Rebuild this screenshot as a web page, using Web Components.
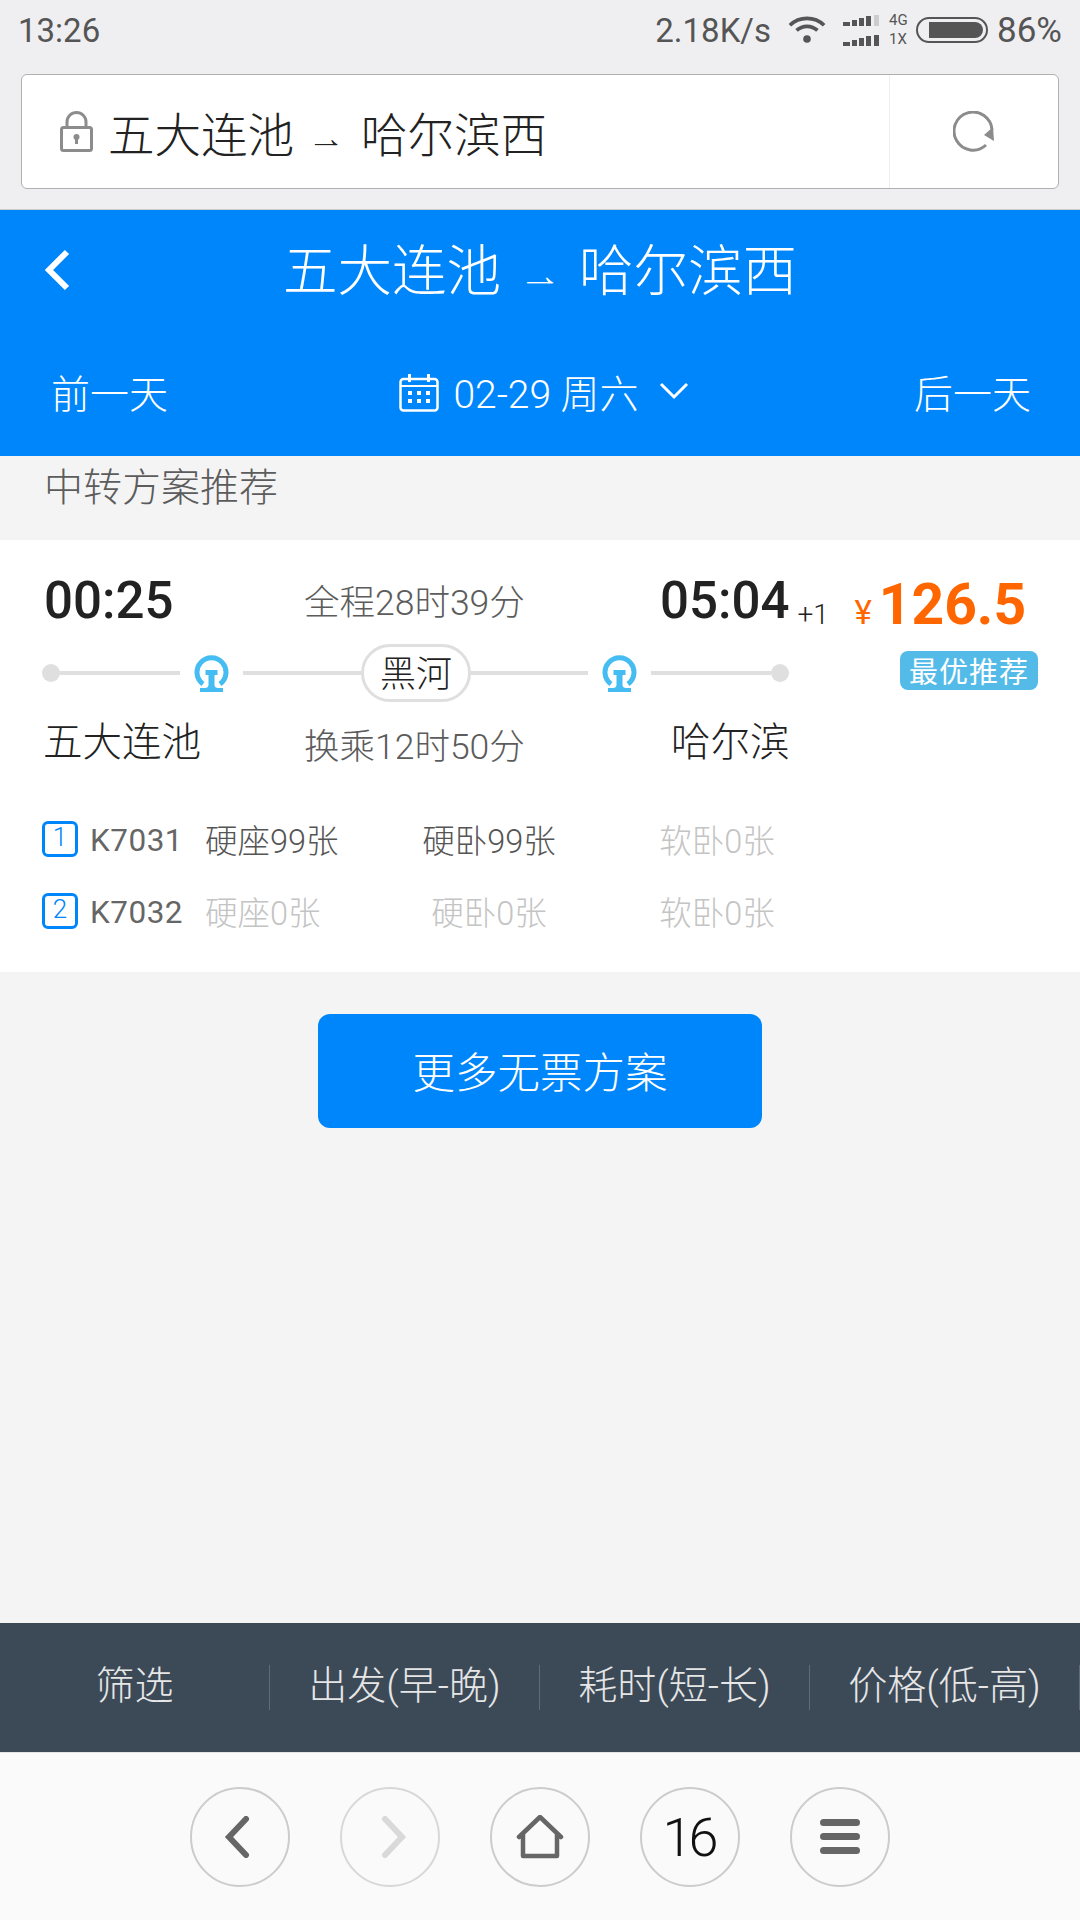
<!DOCTYPE html>
<html lang="zh">
<head>
<meta charset="utf-8">
<title>五大连池 → 哈尔滨西</title>
<style>
    html, body { margin: 0; padding: 0; }
    body {
        width: 1080px;
        height: 1920px;
        display: flex;
        flex-direction: column;
        overflow: hidden;
        background: #f4f4f4;
        font-family: Roboto, "Noto Sans CJK SC", sans-serif;
    }
</style>
</head>
<body>
<status-bar></status-bar>
<address-bar>五大连池</address-bar>
<route-header from="五大连池" to="哈尔滨西"></route-header>
<transfer-list>
    <transfer-card></transfer-card>
    <more-button>更多无票方案</more-button>
</transfer-list>
<filter-bar></filter-bar>
<browser-nav></browser-nav>

<script>
const font = `Roboto, "Noto Sans CJK SC", sans-serif`;

class statusBar extends HTMLElement {
    constructor() {
        super();
        const shadow = this.attachShadow({ mode: "open" });
        shadow.innerHTML = /* html */ `
        <style>
            :host {
                display: flex;
                align-items: center;
                height: 60px;
                padding: 0 18px;
                background: #efeff2;
                color: #555;
                font: 33px ${font};
            }
            .time { flex-grow: 1; }
            .speed { margin-right: 17px; }
            .wifi { margin-right: 17px; }
            .signal { display: flex; flex-direction: column; gap: 9px; margin-right: 9px; }
            .net { display: flex; flex-direction: column; gap: 6px; font-size: 15px; line-height: 13px; width: 27px; }
            .battery { margin-right: 9px; }
            .pct { font-size: 35px; }
            svg { display: block; }
        </style>
        <div class="time">13:26</div>
        <div class="speed">2.18K/s</div>
        <svg class="wifi" width="38" height="28" viewBox="0 0 40 28">
            <path d="M2 9 A26 26 0 0 1 38 9" fill="none" stroke="#555" stroke-width="4"/>
            <path d="M9 14.500 A16 16 0 0 1 31 14.500" fill="none" stroke="#555" stroke-width="4"/>
            <circle cx="20" cy="23.500" r="4" fill="#555"/>
        </svg>
        <div class="signal">
            <svg width="37" height="11" viewBox="0 0 37 11" fill="#555">
                <rect x="0" y="7" width="7" height="4"/><rect x="9" y="5" width="5" height="6"/><rect x="16" y="3" width="5" height="8"/><rect x="23" y="1" width="5" height="10"/><rect x="31" y="0" width="5" height="11" fill="#ccc"/>
            </svg>
            <svg width="37" height="11" viewBox="0 0 37 11" fill="#555">
                <rect x="0" y="7" width="7" height="4"/><rect x="9" y="5" width="5" height="6"/><rect x="16" y="3" width="5" height="8"/><rect x="23" y="1" width="5" height="10"/><rect x="31" y="0" width="5" height="11"/>
            </svg>
        </div>
        <div class="net"><span>4G</span><span>1X</span></div>
        <svg class="battery" width="72" height="26" viewBox="0 0 72 26">
            <rect x="1" y="1" width="70" height="24" rx="12" fill="none" stroke="#555" stroke-width="2"/>
            <path d="M13 5 H59 A8 8 0 0 1 67 13 A8 8 0 0 1 59 21 H13 Z" fill="#555"/>
        </svg>
        <div class="pct">86%</div>
        `;
    }
}

class addressBar extends HTMLElement {
    constructor() {
        super();
        const shadow = this.attachShadow({ mode: "open" });
        shadow.innerHTML = /* html */ `
        <style>
            :host {
                display: block;
                padding: 14px 21px 20px 21px;
                background: #efeff2;
                border-bottom: 1px solid #ccc;
            }
            .box {
                display: flex;
                height: 113px;
                background: #fff;
                border: 1px solid #b0b0b0;
                border-radius: 6px;
            }
            .url {
                flex-grow: 1;
                display: flex;
                align-items: center;
                padding-left: 38px;
                color: #222;
                font: 300 46.500px ${font};
            }
            .lock { margin-right: 15px; }
            .arrow {
                font: 38px "Liberation Sans", sans-serif;
                margin: 13px 16px 0 13px;
                clip-path: inset(0 0 33% 0);
            }
            .reload {
                width: 168px;
                display: flex;
                align-items: center;
                justify-content: center;
                border-left: 1px solid #eee;
            }
        </style>
        <div class="box">
            <div class="url">
                <svg class="lock" width="33" height="41" viewBox="0 0 33 41">
                    <path d="M7 17 V11 A9.500 9.500 0 0 1 26 11 V17" fill="none" stroke="#8c8c8c" stroke-width="3"/>
                    <rect x="1.500" y="16.500" width="30" height="23" rx="2" fill="none" stroke="#8c8c8c" stroke-width="3"/>
                    <circle cx="16.500" cy="26" r="3" fill="#8c8c8c"/><rect x="15" y="26" width="3" height="7" fill="#8c8c8c"/>
                </svg>
                <span><slot></slot></span><span class="arrow">→</span><span>哈尔滨西</span>
            </div>
            <div class="reload">
                <svg width="42" height="42" viewBox="0 0 42 42">
                    <path d="M33 34 A19 19 0 1 1 39 19" fill="none" stroke="#8c8c8c" stroke-width="3"/>
                    <path d="M40 16 L41 30 L31 24 Z" fill="#8c8c8c"/>
                </svg>
            </div>
        </div>
        `;
    }
}

class routeHeader extends HTMLElement {
    constructor() {
        super();
        const shadow = this.attachShadow({ mode: "open" });
        shadow.innerHTML = /* html */ `
        <style>
            :host {
                display: block;
                height: 246px;
                background: #0086fb;
                color: #fff;
                font-family: ${font};
                font-weight: 300;
            }
            .top {
                display: grid;
                grid-template-columns: 1fr auto 1fr;
                align-items: center;
                height: 112px;
                font-size: 54.500px;
            }
            .back { margin: 7px 0 0 43px; display: block; }
            .route { display: flex; align-items: center; }
            .arrow {
                font: 44px "Liberation Sans", sans-serif;
                margin: 18px 17px 0 17px;
                clip-path: inset(0 0 33% 0);
            }
            .dates {
                display: flex;
                justify-content: space-between;
                align-items: center;
                height: 134px;
                padding: 4px 49px 0 51px;
                box-sizing: border-box;
                font-size: 39px;
            }
            .pick { display: flex; align-items: center; margin-left: 6px; }
            .cal { margin: 4px 14px 0 0; }
            .chev { margin-left: 20px; }
        </style>
        <div class="top">
            <svg class="back" width="28" height="42" viewBox="0 0 28 42">
                <path d="M24 3 L6 21 L24 39" fill="none" stroke="#fff" stroke-width="6"/>
            </svg>
            <div class="route">
                <span>${this.getAttribute("from")}</span><span class="arrow">→</span><span>${this.getAttribute("to")}</span>
            </div>
        </div>
        <div class="dates">
            <div>前一天</div>
            <div class="pick">
                <svg class="cal" width="40" height="38" viewBox="0 0 40 38" fill="#fff">
                    <rect x="1.500" y="5" width="37" height="31.500" rx="3" fill="none" stroke="#fff" stroke-width="2.500"/>
                    <rect x="9" y="0" width="3" height="8"/><rect x="28" y="0" width="3" height="8"/>
                    <rect x="2" y="11" width="36" height="2"/>
                    <rect x="9" y="17" width="4" height="4"/><rect x="18" y="17" width="4" height="4"/><rect x="27" y="17" width="4" height="4"/>
                    <rect x="9" y="25" width="4" height="4"/><rect x="18" y="25" width="4" height="4"/><rect x="27" y="25" width="4" height="4"/>
                </svg>
                <span>02-29 周六</span>
                <svg class="chev" width="30" height="18" viewBox="0 0 30 18">
                    <path d="M2 2 L15 15 L28 2" fill="none" stroke="#fff" stroke-width="3"/>
                </svg>
            </div>
            <div>后一天</div>
        </div>
        `;
    }
}

class transferList extends HTMLElement {
    constructor() {
        super();
        const shadow = this.attachShadow({ mode: "open" });
        shadow.innerHTML = /* html */ `
        <style>
            :host {
                display: block;
                flex-grow: 1;
                background: #f4f4f4;
            }
            .title {
                height: 84px;
                padding: 8px 0 0 44px;
                box-sizing: border-box;
                color: #5c5c5c;
                font: 300 39px/48px ${font};
            }
        </style>
        <div class="title">中转方案推荐</div>
        <slot></slot>
        `;
    }
}

class railIcon extends HTMLElement {
    constructor() {
        super();
        const shadow = this.attachShadow({ mode: "open" });
        shadow.innerHTML = /* html */ `
        <style>
            :host { display: block; width: 35px; height: 38px; }
            svg { display: block; }
        </style>
        <svg width="35" height="38" viewBox="0 0 35 38" fill="#45bcf2">
            <path d="M9 30 A14.500 14.500 0 1 1 26 30" fill="none" stroke="#45bcf2" stroke-width="5"/>
            <path d="M11.500 16 H23.500 V21 H20.500 V31 C20.500 33 22 34 24 34 H29 V38 H6 V34 H11 C13 34 14.500 33 14.500 31 V21 H11.500 Z"/>
        </svg>
        `;
    }
}

class trainRow extends HTMLElement {
    constructor() {
        super();
        const shadow = this.attachShadow({ mode: "open" });
        const seats = this.getAttribute("seats").split(",");
        const cell = (text) => {
            const none = /[^9]0张/.test(text);
            return `<div class="seat ${none ? "none" : ""}">${text}</div>`;
        };
        shadow.innerHTML = /* html */ `
        <style>
            :host {
                display: flex;
                align-items: center;
                height: 72px;
                padding-left: 42px;
                color: #555;
                font: 300 31.500px ${font};
            }
            .num {
                width: 36px;
                height: 36px;
                box-sizing: border-box;
                display: flex;
                align-items: center;
                justify-content: center;
                margin-right: 12px;
                padding-bottom: 4px;
                border: 3px solid #0086fb;
                border-radius: 6px;
                color: #0086fb;
                font-size: 26px;
                line-height: 26px;
            }
            .code { width: 115px; padding-top: 2px; color: #666; font-weight: 400; letter-spacing: 0.5px; }
            .seat { font-size: 32.500px; padding-bottom: 2px; }
            .none { color: #c4c4c4; }
            .seat:nth-of-type(3) { width: 170px; }
            .seat:nth-of-type(4) { width: 228px; text-align: center; }
            .seat:nth-of-type(5) { width: 228px; text-align: center; }
        </style>
        <div class="num">${this.getAttribute("num")}</div>
        <div class="code">${this.getAttribute("code")}</div>
        ${cell(seats[0])}${cell(seats[1])}${cell(seats[2])}
        `;
    }
}

class transferCard extends HTMLElement {
    constructor() {
        super();
        const shadow = this.attachShadow({ mode: "open" });
        shadow.innerHTML = /* html */ `
        <style>
            :host {
                display: block;
                height: 432px;
                background: #fff;
                color: #222;
                font-family: ${font};
            }
            .times {
                display: flex;
                align-items: baseline;
                height: 103px;
                padding: 25px 0 0 44px;
                box-sizing: border-box;
            }
            .time { font-size: 51px; font-weight: 500; line-height: 58px; }
            .from { width: 260px; }
            .total { width: 356px; color: #5c5c5c; font-size: 35.500px; font-weight: 300; position: relative; top: -3px; }
            .plus { width: 57px; margin-left: 8px; font-size: 28px; font-weight: 300; position: relative; top: 6px; }
            .yen { color: #ff6600; font-size: 33px; position: relative; top: 6px; margin-right: 7px; }
            .price { color: #ff6600; font-size: 57px; font-weight: 700; position: relative; top: 6px; }
            .track {
                display: flex;
                align-items: center;
                height: 60px;
                padding-left: 42px;
            }
            .dot { width: 18px; height: 18px; border-radius: 50%; background: #dfdfdf; flex: none; }
            .line { height: 4px; background: #dfdfdf; flex: none; }
            .stop {
                flex: none;
                box-sizing: border-box;
                width: 110px;
                height: 58px;
                padding-bottom: 4px;
                display: flex;
                align-items: center;
                justify-content: center;
                border: 3px solid #dfdfdf;
                border-radius: 29px;
                font-size: 36px;
                font-weight: 300;
            }
            rail-icon { margin: 0 14px; flex: none; }
            .tag {
                flex: none;
                margin: -6px 0 0 111px;
                width: 138px;
                height: 39px;
                display: flex;
                align-items: center;
                justify-content: center;
                background: #54bbe9;
                border-radius: 8px;
                color: #fff;
                font-size: 29px;
                font-weight: 400;
                letter-spacing: 1px;
            }
            .names {
                display: flex;
                align-items: center;
                height: 70px;
                padding-left: 43px;
                font-size: 39.500px;
                font-weight: 300;
            }
            .names .a { width: 261px; }
            .names .mid { width: 367px; padding-top: 10px; color: #5c5c5c; font-size: 35.500px; }
            .trains { padding-top: 30px; }
        </style>
        <div class="times">
            <div class="time from">00:25</div>
            <div class="total">全程28时39分</div>
            <div class="time">05:04</div>
            <div class="plus">+1</div>
            <div class="yen">¥</div>
            <div class="price">126.5</div>
        </div>
        <div class="track">
            <div class="dot"></div>
            <div class="line" style="width: 120px"></div>
            <rail-icon></rail-icon>
            <div class="line" style="width: 118px"></div>
            <div class="stop">黑河</div>
            <div class="line" style="width: 117px"></div>
            <rail-icon></rail-icon>
            <div class="line" style="width: 120px"></div>
            <div class="dot"></div>
            <div class="tag">最优推荐</div>
        </div>
        <div class="names">
            <div class="a">五大连池</div>
            <div class="mid">换乘12时50分</div>
            <div>哈尔滨</div>
        </div>
        <div class="trains">
            <train-row num="1" code="K7031" seats="硬座99张,硬卧99张,软卧0张"></train-row>
            <train-row num="2" code="K7032" seats="硬座0张,硬卧0张,软卧0张"></train-row>
        </div>
        `;
    }
}

class moreButton extends HTMLElement {
    constructor() {
        super();
        const shadow = this.attachShadow({ mode: "open" });
        shadow.innerHTML = /* html */ `
        <style>
            :host {
                display: flex;
                justify-content: center;
                padding-top: 42px;
            }
            .btn {
                width: 444px;
                height: 114px;
                padding-bottom: 4px;
                box-sizing: border-box;
                display: flex;
                align-items: center;
                justify-content: center;
                background: #0086fb;
                border-radius: 12px;
                color: #fff;
                font: 300 42.500px ${font};
            }
        </style>
        <div class="btn"><slot></slot></div>
        `;
    }
}

class filterBar extends HTMLElement {
    constructor() {
        super();
        const shadow = this.attachShadow({ mode: "open" });
        const tabs = ["筛选", "出发(早-晚)", "耗时(短-长)", "价格(低-高)"];
        shadow.innerHTML = /* html */ `
        <style>
            :host {
                display: flex;
                height: 129px;
                padding-top: 42px;
                box-sizing: border-box;
                background: #3c4a58;
                color: #e6e6e6;
                font: 300 39px ${font};
            }
            .tab {
                flex: none;
                box-sizing: border-box;
                width: 270px;
                height: 45px;
                padding-bottom: 12px;
                display: flex;
                align-items: center;
                justify-content: center;
                border-right: 1px solid #5f6b77;
            }
            .tab:first-child { width: 268px; }
        </style>
        ${tabs.map((t) => `<div class="tab">${t}</div>`).join("")}
        `;
    }
}

class browserNav extends HTMLElement {
    constructor() {
        super();
        const shadow = this.attachShadow({ mode: "open" });
        shadow.innerHTML = /* html */ `
        <style>
            :host {
                display: flex;
                justify-content: center;
                gap: 50px;
                height: 168px;
                padding-top: 34px;
                box-sizing: border-box;
                background: #fafafa;
                border-top: 1px solid #e4e4e4;
            }
            .circle {
                width: 100px;
                height: 100px;
                box-sizing: border-box;
                display: flex;
                align-items: center;
                justify-content: center;
                border: 2px solid #ccc;
                border-radius: 50%;
            }
            .off { border-color: #d8d8d8; }
            .count { color: #111; font: 300 54px Roboto, sans-serif; letter-spacing: -4px; margin-right: 3px; }
            .prev { margin-right: 7px; }
            .next { margin-left: 7px; }
            svg { display: block; }
        </style>
        <div class="circle">
            <svg class="prev" width="26" height="42" viewBox="0 0 26 42"><path d="M22 3 L5 21 L22 39" fill="none" stroke="#666" stroke-width="6" stroke-linecap="round"/></svg>
        </div>
        <div class="circle off">
            <svg class="next" width="26" height="42" viewBox="0 0 26 42"><path d="M4 3 L21 21 L4 39" fill="none" stroke="#d9d9d9" stroke-width="6" stroke-linecap="round"/></svg>
        </div>
        <div class="circle">
            <svg width="48" height="44" viewBox="0 0 48 44"><path d="M3 22 L24 2 L45 22 M7 19 V41 H41 V19" fill="none" stroke="#666" stroke-width="4.500" stroke-linecap="round" stroke-linejoin="round"/></svg>
        </div>
        <div class="circle"><span class="count">16</span></div>
        <div class="circle">
            <svg width="40" height="36" viewBox="0 0 40 36" fill="#666"><rect x="0" y="0" width="40" height="7" rx="3.500"/><rect x="0" y="14" width="40" height="7" rx="3.500"/><rect x="0" y="28" width="40" height="7" rx="3.500"/></svg>
        </div>
        `;
    }
}

customElements.define("status-bar", statusBar);
customElements.define("address-bar", addressBar);
customElements.define("route-header", routeHeader);
customElements.define("transfer-list", transferList);
customElements.define("rail-icon", railIcon);
customElements.define("train-row", trainRow);
customElements.define("transfer-card", transferCard);
customElements.define("more-button", moreButton);
customElements.define("filter-bar", filterBar);
customElements.define("browser-nav", browserNav);
</script>
</body>
</html>
